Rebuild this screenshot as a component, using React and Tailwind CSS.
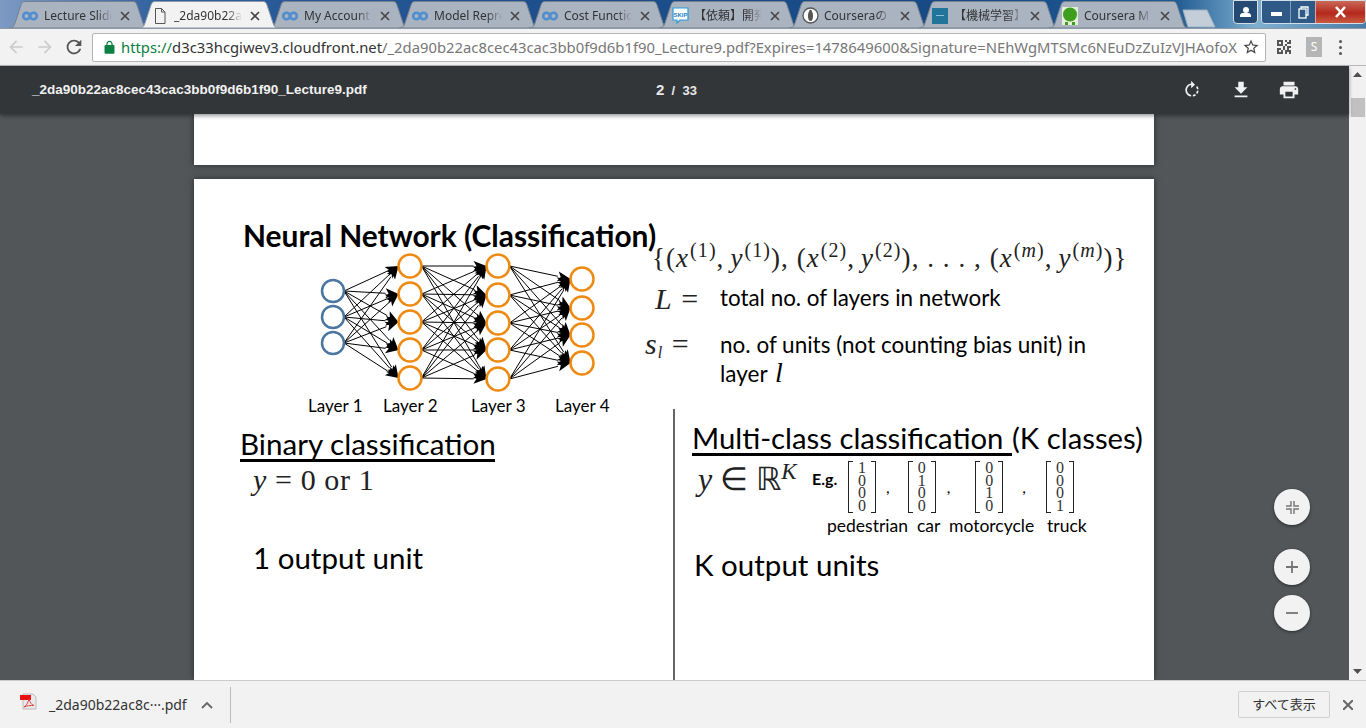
import React from "react";

const UI = "font-['Noto_Sans','Noto_Sans_CJK_JP',sans-serif]";
const SLIDE = "font-['Lato','Noto_Sans',sans-serif]";
const MATH = "font-['Liberation_Serif',serif]";

function M({ d, size = 24, className = "" }) {
  return (
    <svg width={size} height={size} viewBox="0 0 24 24" className={className} fill="currentColor">
      <path d={d} />
    </svg>
  );
}

function CourseraIcon() {
  return (
    <svg width="16" height="10" viewBox="0 0 16 10" fill="none" stroke="#4f8fd0" strokeWidth="2.600">
      <circle cx="4.500" cy="5" r="3.300" />
      <circle cx="11.500" cy="5" r="3.300" />
    </svg>
  );
}
function FileIcon() {
  return (
    <svg width="12" height="16" viewBox="0 0 12 16" fill="none" stroke="#555" strokeWidth="1">
      <path d="M1.500 .5h6l3.500 3.500v11.500h-9.500z M7.500 .5v3.500h3.500" />
    </svg>
  );
}
function SkipIcon() {
  return (
    <svg width="17" height="18" viewBox="0 0 17 18">
      <path d="M1 1h15v12H8l-3 3v-3H1z" fill="#fff" stroke="#2a9bdc" strokeWidth="1.200" />
      <text x="8.500" y="9.500" textAnchor="middle" fontSize="6" fontWeight="700" fill="#1b7fc0" fontFamily="Liberation Sans">SKIP</text>
    </svg>
  );
}
function CourseraJpIcon() {
  return (
    <svg width="17" height="17" viewBox="0 0 17 17">
      <circle cx="8.500" cy="8.500" r="7.500" fill="#fff" stroke="#555" strokeWidth="1.300" />
      <ellipse cx="8.500" cy="9" rx="2.500" ry="5" fill="#555" />
      <circle cx="8.500" cy="4" r="1.300" fill="#555" />
    </svg>
  );
}
function BlueIcon() {
  return (
    <div className="w-[16px] h-[16px] bg-[#21759b] flex items-center justify-center">
      <div className="w-[8px] h-[1px] bg-[#8fc0d8]" />
    </div>
  );
}
function QIcon() {
  return (
    <svg width="16" height="18" viewBox="0 0 16 18">
      <rect width="16" height="18" fill="#e4efd8" />
      <circle cx="8" cy="7.500" r="7" fill="#3f9e1e" />
      <rect x="3" y="15" width="3" height="3" fill="#3f9e1e" />
      <rect x="10" y="15" width="3" height="3" fill="#3f9e1e" />
    </svg>
  );
}

const tabs = [
  { icon: <CourseraIcon />, label: "Lecture Slides" },
  { icon: <FileIcon />, label: "_2da90b22ac8c", active: true },
  { icon: <CourseraIcon />, label: "My Account" },
  { icon: <CourseraIcon />, label: "Model Repres" },
  { icon: <CourseraIcon />, label: "Cost Function" },
  { icon: <SkipIcon />, label: "【依頼】開発" },
  { icon: <CourseraJpIcon />, label: "Courseraの" },
  { icon: <BlueIcon />, label: "【機械学習】" },
  { icon: <QIcon />, label: "Coursera M" },
];

function Tab({ icon, label, active }) {
  return (
    <div className={`relative w-[140px] h-[27px] shrink-0 -mr-[10px] ${active ? "z-10" : ""}`}>
      <svg className="absolute inset-0" width="140" height="27" viewBox="0 0 140 27">
        <path
          d="M0 27 C4 27 5 25 6 22 L12 4 C13 1 14 .5 17 .5 L123 .5 C126 .5 127 1 128 4 L134 22 C135 25 136 27 140 27 Z"
          fill={active ? "#f2f2f2" : "#aab3c0"}
          stroke={active ? "#8d99a8" : "#76818f"}
          strokeWidth="1"
        />
      </svg>
      <div className="absolute left-[11px] right-[19px] top-[2px] h-[25px] flex items-center">
        <div className="w-[20px] flex items-center justify-center shrink-0">{icon}</div>
        <div className={`ml-[4px] w-[68px] overflow-hidden whitespace-nowrap text-[12px] text-[#333] ${UI} [mask-image:linear-gradient(to_right,black_78%,transparent)]`}>
          {label}
        </div>
        <svg className="ml-auto shrink-0" width="10" height="10" viewBox="0 0 10 10" stroke="#444" strokeWidth="1.600">
          <path d="M1 1l8 8M9 1l-8 8" />
        </svg>
      </div>
    </div>
  );
}

function TabStrip() {
  return (
    <div className="h-[29px] shrink-0 flex items-end pl-[9px] overflow-hidden bg-[linear-gradient(90deg,#7d9ac4_0%,#2f5f9c_12%,#1d4f8c_40%,#174a84_70%,#1f5a92_86%,#7fb0cf_92%,#4a7ca8_100%)] border-b border-[#8d99a8] relative">
      {tabs.map((t, i) => (
        <Tab key={i} {...t} />
      ))}
      <svg className="ml-[3px] shrink-0" width="34" height="19" viewBox="0 0 34 19">
        <path d="M1 1h24l8 17H6z" fill="#c3ced8" stroke="#9fb0bf" />
      </svg>
      <div className="absolute right-[0px] top-0 flex items-start">
        <div className="w-[25px] h-[24px] border border-[#d5dde5] rounded-b-[4px] bg-[#254a74] flex flex-col items-center justify-center">
          <div className="w-[6px] h-[6px] rounded-full bg-white" />
          <div className="w-[11px] h-[4px] rounded-t-[3px] bg-white" />
        </div>
        <div className="flex ml-[3px] border border-[#d5dde5] rounded-b-[4px] overflow-hidden h-[24px]">
          <div className="w-[28px] bg-[#2f5a88] flex items-center justify-center">
            <div className="w-[11px] h-[4px] mt-[3px] bg-white" />
          </div>
          <div className="w-[25px] bg-[#2f5a88] flex items-center justify-center border-l border-[#7f9ab5]">
            <svg width="11" height="13" viewBox="0 0 11 13" fill="none" stroke="#fff" strokeWidth="1.300">
              <rect x="1" y="3" width="7" height="9" />
              <path d="M3 3V1h7v8H8" />
            </svg>
          </div>
          <div className="w-[50px] bg-[linear-gradient(180deg,#c9695a,#b5281c_55%,#c85a40)] flex items-center justify-center border-l border-[#d9a79a]">
            <svg width="13" height="12" viewBox="0 0 13 12" stroke="#fff" strokeWidth="2.600">
              <path d="M2 1l9 10M11 1L2 11" />
            </svg>
          </div>
        </div>
      </div>
    </div>
  );
}

function QrIcon() {
  const cells = ["1110101", "1010011", "1110100", "0001011", "1101010", "1010111", "1110101"];
  return (
    <svg width="14" height="14" viewBox="0 0 7 7" fill="#555">
      {cells.flatMap((row, y) =>
        row.split("").map((c, x) => (c === "1" ? <rect key={`${x}-${y}`} x={x} y={y} width="1" height="1" /> : null))
      )}
    </svg>
  );
}

function Toolbar() {
  return (
    <div className="h-[37px] shrink-0 bg-[#f2f2f2] border-b border-[#b8b8b8] flex items-center pl-[6px] pr-[4px]">
      <M size={20} className="text-[#ccc]" d="M20 11H7.830l5.590-5.590L12 4l-8 8 8 8 1.410-1.410L7.830 13H20v-2z" />
      <M size={20} className="text-[#ccc] ml-[9px]" d="M12 4l-1.410 1.410L16.170 11H4v2h12.170l-5.580 5.590L12 20l8-8z" />
      <M size={22} className="text-[#555] ml-[8px]" d="M17.650 6.350C16.200 4.900 14.210 4 12 4c-4.420 0-7.990 3.580-7.990 8s3.570 8 7.990 8c3.730 0 6.840-2.550 7.730-6h-2.080c-.820 2.330-3.040 4-5.650 4-3.310 0-6-2.690-6-6s2.690-6 6-6c1.660 0 3.140.690 4.220 1.780L13 11h7V4l-2.350 2.350z" />
      <div className="ml-[7px] w-[1174px] h-[29px] bg-white border border-[#b4b4b4] rounded-[2px] flex items-center pl-[9px] pr-[5px]">
        <M size={15} className="text-[#0b8043] shrink-0" d="M18 8h-1V6c0-2.760-2.240-5-5-5S7 3.240 7 6v2H6c-1.100 0-2 .9-2 2v10c0 1.100.9 2 2 2h12c1.100 0 2-.9 2-2V10c0-1.100-.9-2-2-2zM9 6c0-1.660 1.340-3 3-3s3 1.340 3 3v2H9V6z" />
        <div className={`ml-[4px] flex-1 overflow-hidden whitespace-nowrap text-[14.800px] tracking-[0.010px] text-[#777] ${UI}`}>
          <span className="text-[#0b8043]">https://</span>
          <span className="text-[#333]">d3c33hcgiwev3.cloudfront.net</span>
          /_2da90b22ac8cec43cac3bb0f9d6b1f90_Lecture9.pdf?Expires=1478649600&amp;Signature=NEhWgMTSMc6NEuDzZuIzVJHAofoX
        </div>
        <M size={18} className="text-[#444] ml-[4px] shrink-0" d="M22 9.240l-7.190-.620L12 2 9.190 8.630 2 9.240l5.460 4.730L5.820 21 12 17.270 18.180 21l-1.630-7.030L22 9.240zM12 15.400l-3.760 2.270 1-4.280-3.320-2.880 4.380-.380L12 6.100l1.710 4.040 4.380.380-3.320 2.880 1 4.280L12 15.400z" />
      </div>
      <div className="ml-[11px]"><QrIcon /></div>
      <div className={`ml-[15px] w-[16px] h-[20px] bg-[#b5b5b5] text-white text-[12px] flex items-center justify-center ${UI}`}>S</div>
      <div className="ml-[17px] flex flex-col gap-[3px]">
        <div className="w-[3px] h-[3px] rounded-full bg-[#555]" />
        <div className="w-[3px] h-[3px] rounded-full bg-[#555]" />
        <div className="w-[3px] h-[3px] rounded-full bg-[#555]" />
      </div>
    </div>
  );
}

function PdfBar() {
  return (
    <div className="relative z-10 h-[48px] shrink-0 bg-[#323639] text-[#f1f1f1] flex items-center pl-[32px] shadow-[0_2px_4px_rgba(0,0,0,0.4)] font-['Liberation_Sans',sans-serif]">
      <div className="w-[624px] text-[13.500px] font-bold whitespace-nowrap">_2da90b22ac8cec43cac3bb0f9d6b1f90_Lecture9.pdf</div>
      <div className="w-[526px] whitespace-nowrap font-bold text-[#e8e8e8]">
        <span className="text-[15px]">2</span>
        <span className="text-[13px]"> &nbsp;/ &nbsp;33</span>
      </div>
      <M size={20} d="M15.550 5.550L11 1v3.070C7.060 4.560 4 7.920 4 12s3.050 7.440 7 7.930v-2.020c-2.840-.480-5-2.940-5-5.910s2.160-5.430 5-5.910V10l4.550-4.450zM19.930 11c-.170-1.390-.720-2.730-1.620-3.890l-1.420 1.420c.540.750.880 1.600 1.020 2.470h2.020zM13 17.900v2.020c1.390-.170 2.740-.710 3.900-1.610l-1.440-1.440c-.750.540-1.590.890-2.460 1.030zm3.890-2.420l1.420 1.410c.9-1.160 1.450-2.500 1.620-3.890h-2.020c-.140.870-.480 1.720-1.020 2.480z" />
      <M size={22} className="ml-[28px]" d="M19 9h-4V3H9v6H5l7 7 7-7zM5 18v2h14v-2H5z" />
      <M size={22} className="ml-[26px]" d="M19 8H5c-1.660 0-3 1.340-3 3v6h4v4h12v-4h4v-6c0-1.660-1.340-3-3-3zm-3 11H8v-5h8v5zm3-7c-.550 0-1-.450-1-1s.450-1 1-1 1 .450 1 1-.450 1-1 1zm-1-9H6v4h12V3z" />
    </div>
  );
}

const layers = [
  { x: 23, r: 11, c: "#4b76a0", ys: [41, 67, 93] },
  { x: 100, r: 11.500, c: "#ee8a12", ys: [16, 44, 72, 100, 128] },
  { x: 188, r: 11.500, c: "#ee8a12", ys: [16, 45, 73, 100, 129] },
  { x: 272, r: 11.500, c: "#ee8a12", ys: [29, 58, 85, 113] },
];

function Network() {
  const arrows = [];
  for (let i = 0; i < 3; i++) {
    const a = layers[i];
    const b = layers[i + 1];
    a.ys.forEach((y1) => {
      b.ys.forEach((y2) => {
        const x1 = a.x + a.r;
        const x2 = b.x - b.r;
        const dx = x2 - x1;
        const dy = y2 - y1;
        const l = Math.hypot(dx, dy);
        const ux = dx / l;
        const uy = dy / l;
        const hx = x2 - ux * 13;
        const hy = y2 - uy * 13;
        const p = `${x2},${y2} ${hx - uy * 5},${hy + ux * 5} ${hx + ux * 3},${hy + uy * 3} ${hx + uy * 5},${hy - ux * 5}`;
        arrows.push(
          <g key={`${i}-${y1}-${y2}`}>
            <line x1={x1} y1={y1} x2={hx} y2={hy} stroke="#000" strokeWidth="1" />
            <polygon points={p} fill="#000" />
          </g>
        );
      });
    });
  }
  return (
    <svg width="300" height="146" viewBox="0 0 300 146" className="ml-[116px] -mt-[5px] block">
      {arrows}
      {layers.map((l, i) =>
        l.ys.map((y) => <circle key={`${i}-${y}`} cx={l.x} cy={y} r={l.r} fill="#fff" stroke={l.c} strokeWidth="2.500" />)
      )}
    </svg>
  );
}

function Sup({ children }) {
  return <sup className="text-[20px] align-baseline relative -top-[10px] ml-[1px]">{children}</sup>;
}
function Pair({ n }) {
  return (
    <>
      (<i>x</i><Sup>({n})</Sup>,<span className="ml-[6px]"><i>y</i></span><Sup>({n})</Sup>)
    </>
  );
}

function Matrix({ values }) {
  return (
    <div className="flex h-[52px] w-[28px] shrink-0">
      <div className="w-[5px] border-l border-y border-[#222]" />
      <div className={`flex-1 flex flex-col items-center justify-center text-[16px] leading-[12.500px] text-[#333] ${MATH}`}>
        {values.map((v, i) => (
          <div key={i}>{v}</div>
        ))}
      </div>
      <div className="w-[5px] border-r border-y border-[#222]" />
    </div>
  );
}

function Slide() {
  return (
    <div className={`mt-[14px] w-[960px] ml-[194px] h-[501px] shrink-0 bg-white shadow-[0_0_6px_rgba(0,0,0,0.5)] text-black flex flex-col overflow-hidden ${SLIDE}`}>
      <div className="h-[230px] shrink-0 flex">
        <div className="w-[458px] shrink-0">
          <div className="ml-[49px] mt-[37px] h-[39px] leading-[38px] text-[29.900px] font-bold whitespace-nowrap">Neural Network (Classification)</div>
          <Network />
          <div className="flex text-[17px] leading-[22px] whitespace-nowrap -mt-[1px]">
            <div className="ml-[114px] w-[75px]">Layer 1</div>
            <div className="w-[88px]">Layer 2</div>
            <div className="w-[84px]">Layer 3</div>
            <div>Layer 4</div>
          </div>
        </div>
        <div className="flex-1 min-w-0">
          <div className={`mt-[59px] h-[40px] leading-[40px] text-[27px] tracking-[1.050px] whitespace-nowrap text-[#222] ${MATH}`}>
            {"{"}<Pair n="1" />, <Pair n="2" />, . . . , <Pair n={<i>m</i>} />{"}"}
          </div>
          <div className="flex h-[38px] items-center mt-[1px]">
            <div className={`w-[68px] pl-[3px] text-[30px] tracking-[1px] text-[#222] whitespace-nowrap ${MATH}`}><i>L</i> =</div>
            <div className="text-[22.400px] whitespace-nowrap">total no. of layers in network</div>
          </div>
          <div className="flex mt-[14px]">
            <div className={`w-[68px] -ml-[7px] mr-[7px] text-[30px] leading-[26px] tracking-[1px] text-[#222] whitespace-nowrap ${MATH}`}>
              <i>s<sub className="text-[16px]">l</sub></i> =
            </div>
            <div className="w-[400px] text-[22.500px] leading-[28px]">
              no. of units (not counting bias unit) in
              <br />
              layer <i className={`text-[28px] ml-[2px] ${MATH}`}>l</i>
            </div>
          </div>
        </div>
      </div>

      <div className="flex flex-1">
        <div className="w-[479px] shrink-0 pl-[46px]">
          <div className="mt-[19px] w-[255px] h-[34px] leading-[32px] text-[29.600px] border-b-[3px] border-black whitespace-nowrap">Binary classification</div>
          <div className={`ml-[13px] mt-[1px] h-[34px] leading-[34px] text-[30px] tracking-[0.600px] text-[#222] whitespace-nowrap ${MATH}`}>
            <i>y</i> = 0 or 1
          </div>
          <div className="ml-[13px] mt-[42px] h-[38px] leading-[38px] text-[29.500px] whitespace-nowrap">1 output unit</div>
        </div>
        <div className="w-[2px] bg-[#666] shrink-0" />
        <div className="flex-1 pl-[17px] min-w-0">
          <div className="mt-[13px] h-[34px] whitespace-nowrap text-[29.300px] leading-[31px] flex">
            <span className="border-b-[3px] border-black w-[320px] h-[34px]">Multi-class classification</span>
            <span>(K classes)</span>
          </div>
          <div className="flex mt-[5px] h-[53px] items-start">
            <div className={`ml-[6px] w-[114px] text-[32px] leading-[36px] whitespace-nowrap text-[#222] ${MATH}`}>
              <i>y</i> ∈ ℝ<sup className="text-[23px] align-baseline relative -top-[11px]"><i>K</i></sup>
            </div>
            <div className="w-[36px] text-[16px] font-bold leading-[24px] mt-[6px]">E.g.</div>
            <Matrix values={[1, 0, 0, 0]} />
            <span className="ml-[10px] mr-[18px] mt-[14px] text-[16px]">,</span>
            <Matrix values={[0, 1, 0, 0]} />
            <span className="ml-[11px] mr-[25px] mt-[14px] text-[16px]">,</span>
            <Matrix values={[0, 0, 1, 0]} />
            <span className="ml-[19px] mr-[20px] mt-[14px] text-[16px]">,</span>
            <Matrix values={[0, 0, 0, 1]} />
          </div>
          <div className="flex mt-[1px] ml-[135px] text-[17.500px] leading-[22px] whitespace-nowrap">
            <div className="w-[90px]">pedestrian</div>
            <div className="w-[32px]">car</div>
            <div className="w-[98px]">motorcycle</div>
            <div>truck</div>
          </div>
          <div className="ml-[2px] mt-[9px] h-[38px] leading-[38px] text-[29.500px] whitespace-nowrap">K output units</div>
        </div>
      </div>
    </div>
  );
}

function RoundBtn({ children, cls = "" }) {
  return (
    <div className={`w-[36px] h-[36px] rounded-full bg-[#f2f2f2] shadow-[0_1px_3px_rgba(0,0,0,0.5)] flex items-center justify-center text-[#757575] ${cls}`}>
      {children}
    </div>
  );
}

function Viewer() {
  return (
    <div className="relative flex-1 min-h-0 bg-[#525659] overflow-hidden flex flex-col">
      <div className="w-[960px] ml-[194px] h-[51px] shrink-0 bg-white shadow-[0_0_6px_rgba(0,0,0,0.5)]" />
      <Slide />
      <div className="absolute left-[1274px] top-[375px] flex flex-col">
        <RoundBtn>
          <svg width="13" height="13" viewBox="0 0 13 13" fill="none" stroke="#757575" strokeWidth="1.400">
            <path d="M5 0v5H0M8 0v5h5M5 13V8H0M8 13V8h5" />
          </svg>
        </RoundBtn>
        <RoundBtn cls="mt-[24px]">
          <svg width="14" height="14" viewBox="0 0 14 14" stroke="#757575" strokeWidth="1.800">
            <path d="M7 1v12M1 7h12" />
          </svg>
        </RoundBtn>
        <RoundBtn cls="mt-[10px]">
          <svg width="14" height="14" viewBox="0 0 14 14" stroke="#757575" strokeWidth="1.800">
            <path d="M1 7h12" />
          </svg>
        </RoundBtn>
      </div>
    </div>
  );
}

function Scrollbar() {
  return (
    <div className="w-[17px] shrink-0 bg-[#f1f1f1] flex flex-col items-center">
      <svg className="mt-[6px]" width="9" height="5" viewBox="0 0 9 5"><path d="M4.500 0l4.500 5H0z" fill="#505050" /></svg>
      <div className="mt-[21px] w-[14px] h-[19px] bg-[#c1c1c1]" />
      <svg className="mt-auto mb-[6px]" width="9" height="5" viewBox="0 0 9 5"><path d="M0 0h9L4.500 5z" fill="#505050" /></svg>
    </div>
  );
}

function DownloadBar() {
  return (
    <div className="h-[48px] shrink-0 bg-[#f2f2f2] border-t border-[#ccc] flex items-center pl-[20px]">
      <svg width="17" height="17" viewBox="0 0 17 17" className="-mt-[6px] shrink-0">
        <path d="M3 1h10l3 3v12H3z" fill="#e8e8e8" stroke="#bbb" />
        <rect x="0" y="2" width="11" height="5" fill="#e81010" />
        <path d="M9 6c-1 4-3 7-5 8 3-1 6-2 10-1.500-3-1-4-3-5-6.500z" fill="none" stroke="#d44" strokeWidth="1" />
      </svg>
      <div className={`ml-[12px] w-[152px] text-[14px] text-[#333] whitespace-nowrap ${UI}`}>_2da90b22ac8c···.pdf</div>
      <svg className="shrink-0" width="12" height="8" viewBox="0 0 12 8" fill="none" stroke="#666" strokeWidth="1.800">
        <path d="M1 7l5-5 5 5" />
      </svg>
      <div className="ml-[17px] w-[1px] h-[36px] bg-[#bbb]" />
      <div className={`ml-auto w-[92px] h-[27px] border border-[#d0d0d0] rounded-[2px] flex items-center justify-center text-[13px] text-[#333] ${UI}`}>すべて表示</div>
      <svg className="ml-[13px] mr-[13px] shrink-0" width="10" height="10" viewBox="0 0 10 10" stroke="#666" strokeWidth="2">
        <path d="M0 0l10 10M10 0L0 10" />
      </svg>
    </div>
  );
}

export default function App() {
  return (
    <div className="w-[1366px] h-[728px] flex flex-col overflow-hidden">
      <TabStrip />
      <Toolbar />
      <div className="flex-1 min-h-0 flex">
        <div className="flex-1 min-w-0 flex flex-col">
          <PdfBar />
          <Viewer />
        </div>
        <Scrollbar />
      </div>
      <DownloadBar />
    </div>
  );
}
